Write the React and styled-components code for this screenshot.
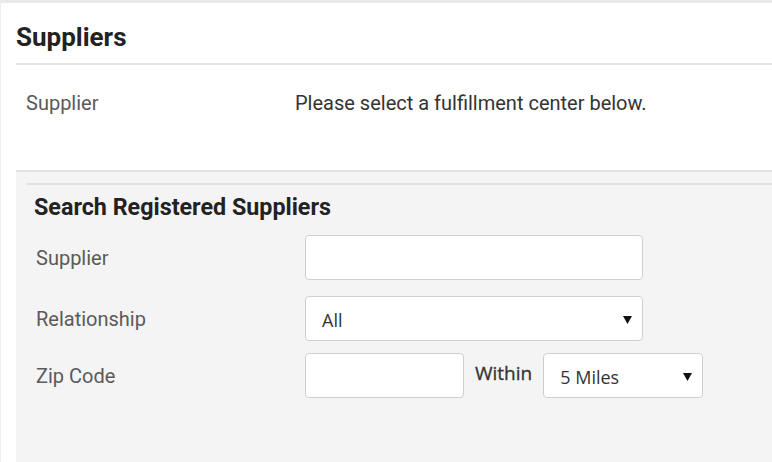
import React from 'react';
import styled, {createGlobalStyle} from 'styled-components';

const GlobalStyle = createGlobalStyle`
    body {
        margin: 0;
        background-color: white;
        font-family: Roboto, "Liberation Sans", sans-serif;
    }
`
const Page = styled.div`
    box-sizing: border-box;
    width: 100%;
    border-top: 3px solid #e9e9e9;
    border-left: 1px solid #eeeeee;
    padding-left: 15px;
    height: 462px;
    display: flex;
    flex-direction: column;
    overflow: hidden;
`
const Title = styled.h1`
    margin: 18px 0 10px 0;
    font-size: 26px;
    line-height: 32px;
    font-weight: 700;
    color: #222;
`
const Divider = styled.div`
    height: 2px;
    background-color: #e4e4e4;
`
const InfoRow = styled.div`
    display: grid;
    grid-template-columns: 269px 1fr;
    padding: 26px 0 0 10px;
    height: 79px;
`
const Label = styled.span`
    font-size: 20px;
    line-height: 24px;
    color: #5a5a5a;
    padding-left: ${props => props.indent || 0}px;
`
const Message = styled.span`
    font-size: 20px;
    line-height: 24px;
    color: #333;
`
const SearchPanel = styled.div`
    flex: 1;
    background-color: #f4f4f4;
    border-top: 2px solid #e2e2e2;
    padding: 11px 0 0 11px;
`
const SearchBox = styled.div`
    border-top: 2px solid #e2e2e2;
    padding-left: 7px;
`
const SearchTitle = styled.h2`
    margin: 8px 0 14px 0;
    font-size: 23.3px;
    line-height: 28px;
    font-weight: 700;
    color: #222;
`
const FormRow = styled.div`
    display: grid;
    grid-template-columns: 271px auto;
    align-items: center;
    margin-bottom: ${props => props.space || 0}px;
`
const Fields = styled.div`
    display: flex;
    align-items: center;
    gap: 11px;
`
const TextInput = styled.input`
    box-sizing: border-box;
    width: ${props => props.width}px;
    height: 45px;
    border: 1px solid #cfcfcf;
    border-radius: 4px;
    background-color: white;
    padding: 0 16px;
    font-family: "Open Sans", sans-serif;
    font-size: 18px;
    outline: none;
`
const SelectBox = styled.div`
    box-sizing: border-box;
    width: ${props => props.width}px;
    height: 45px;
    border: 1px solid #cfcfcf;
    border-radius: 4px;
    background-color: white;
    display: flex;
    align-items: center;
    justify-content: space-between;
    padding: 3px 10px 0 16px;
    font-family: "Open Sans", sans-serif;
    font-size: 18px;
    color: #333;
`
const Within = styled.span`
    font-family: "Open Sans", sans-serif;
    font-size: 19px;
    font-weight: 400;
    color: #333;
    -webkit-text-stroke: 0.3px #333;
    padding-bottom: 6px;
`

function Arrow() {
    return (
        <svg width="9" height="8" viewBox="0 0 9 8">
            <polygon points="0,0 9,0 4.5,8" fill="#111" />
        </svg>
    )
}

function App() {
    return (
        <Page>
            <GlobalStyle />
            <Title>Suppliers</Title>
            <Divider />
            <InfoRow>
                <Label>Supplier</Label>
                <Message>Please select a fulfillment center below.</Message>
            </InfoRow>
            <SearchPanel>
                <SearchBox>
                    <SearchTitle>Search Registered Suppliers</SearchTitle>
                    <FormRow space={16}>
                        <Label indent={2}>Supplier</Label>
                        <TextInput width={338} />
                    </FormRow>
                    <FormRow space={12}>
                        <Label indent={2}>Relationship</Label>
                        <SelectBox width={338}>
                            <span>All</span>
                            <Arrow />
                        </SelectBox>
                    </FormRow>
                    <FormRow>
                        <Label indent={2}>Zip Code</Label>
                        <Fields>
                            <TextInput width={159} />
                            <Within>Within</Within>
                            <SelectBox width={160}>
                                <span>5 Miles</span>
                                <Arrow />
                            </SelectBox>
                        </Fields>
                    </FormRow>
                </SearchBox>
            </SearchPanel>
        </Page>
    )
}

export default App
